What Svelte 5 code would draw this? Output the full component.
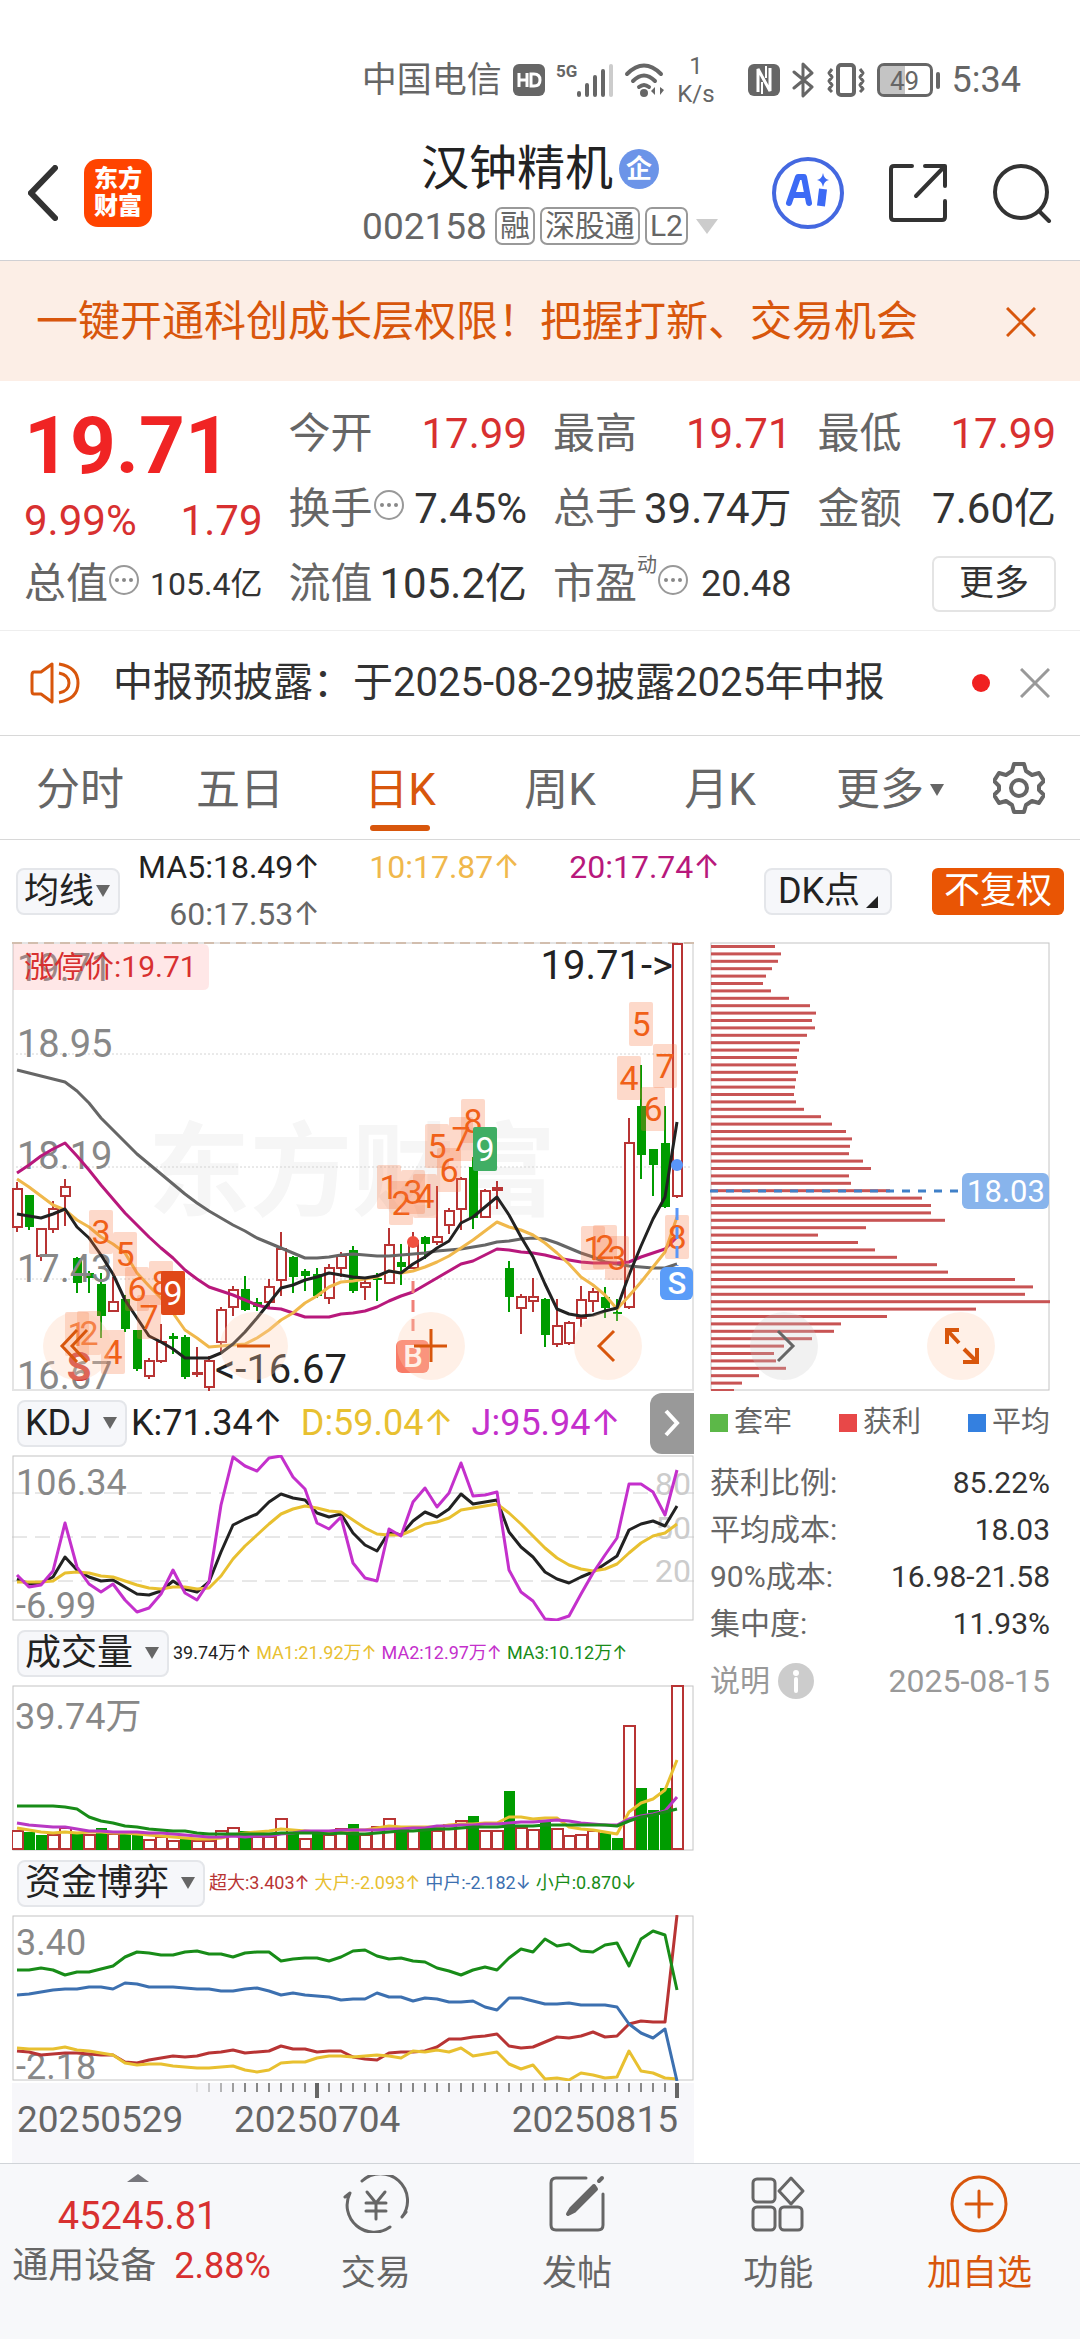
<script lang="ts">
    type Candle = [up: number, top: number, bottom: number, high: number, low: number];

    const STEP = 12;
    const START = 5;

    // 1 = rise, 0 = fall, then body top, body bottom, high, low
    const candles: Candle[] = [
        [1, 246, 286, 240, 290], [0, 253, 285, 253, 288], [1, 286, 315, 286, 319], [1, 266, 288, 259, 291],
        [1, 244, 255, 237, 284], [0, 316, 341, 315, 351], [0, 331, 336, 329, 351], [0, 342, 374, 331, 396],
        [1, 359, 370, 335, 370], [0, 357, 387, 353, 390], [0, 388, 427, 388, 429], [1, 418, 435, 416, 437],
        [1, 399, 420, 382, 421], [0, 394, 397, 391, 412], [0, 395, 435, 393, 437], [1, 430, 432, 405, 435],
        [1, 418, 446, 414, 449], [1, 367, 401, 365, 412], [1, 347, 366, 344, 374], [0, 347, 368, 334, 369],
        [0, 360, 365, 356, 369], [1, 344, 361, 337, 365], [1, 306, 339, 290, 354], [0, 315, 335, 314, 351],
        [0, 329, 334, 327, 349], [0, 332, 354, 326, 356], [1, 325, 357, 322, 362], [1, 313, 327, 310, 335],
        [0, 308, 349, 304, 351], [1, 340, 346, 338, 358], [0, 336, 338, 331, 359], [1, 302, 342, 286, 342],
        [0, 320, 325, 302, 343], [1, 298, 327, 290, 327], [0, 295, 302, 294, 317], [1, 294, 301, 244, 303],
        [1, 268, 284, 266, 292], [1, 236, 268, 235, 288], [0, 225, 276, 215, 287], [1, 248, 276, 247, 276],
        [1, 245, 249, 239, 267], [0, 326, 355, 319, 370], [1, 354, 367, 352, 392], [1, 354, 360, 336, 370],
        [0, 357, 393, 356, 405], [1, 383, 403, 357, 405], [1, 380, 402, 379, 403], [1, 357, 377, 344, 385],
        [1, 349, 360, 346, 370], [0, 355, 366, 345, 376], [0, 370, 372, 357, 379], [1, 200, 366, 176, 367],
        [0, 164, 213, 123, 237], [0, 207, 223, 207, 254], [0, 201, 265, 164, 266], [1, 1, 255, 1, 256],
    ];

    const ma5 = [272, 274, 276, 272, 267, 285, 296, 313, 332, 358, 376, 394, 400, 407, 416, 416, 416, 411, 402, 390, 376, 361, 346, 343, 338, 335, 331, 333, 335, 336, 334, 329, 331, 322, 315, 306, 299, 281, 275, 265, 255, 273, 295, 315, 342, 367, 372, 374, 373, 369, 366, 333, 304, 277, 255, 180];
    const ma10 = [237, 245, 254, 263, 268, 278, 285, 295, 302, 311, 331, 344, 356, 371, 388, 396, 405, 404, 403, 402, 396, 388, 378, 371, 361, 354, 345, 340, 339, 337, 335, 329, 331, 329, 325, 320, 314, 306, 298, 289, 280, 285, 288, 293, 301, 311, 322, 335, 343, 353, 367, 354, 340, 325, 310, 275];
    const ma20 = [231, 223, 214, 207, 201, 214, 228, 243, 257, 271, 283, 295, 306, 316, 328, 337, 345, 349, 353, 358, 363, 366, 367, 371, 375, 375, 375, 372, 371, 369, 365, 359, 354, 350, 343, 336, 329, 322, 319, 313, 307, 308, 310, 311, 313, 316, 318, 320, 321, 321, 321, 320, 315, 311, 307, 295];
    const ma60 = [128, 131, 134, 137, 140, 149, 161, 176, 188, 200, 212, 222, 232, 242, 252, 261, 269, 276, 283, 289, 296, 301, 306, 311, 316, 316, 315, 313, 312, 313, 314, 314, 313, 312, 311, 309, 308, 307, 305, 303, 300, 299, 297, 296, 297, 301, 306, 311, 315, 320, 322, 324, 325, 326, 326, 322];

    // candle index, centre y, count
    const counts = [
        [5, 392, 1], [6, 391, 2], [7, 290, 3], [8, 410, 4], [9, 312, 5], [10, 347, 6], [11, 375, 7], [12, 341, 8],
        [31, 245, 1], [32, 261, 2], [33, 250, 3], [34, 254, 4], [35, 204, 5], [36, 228, 6], [37, 197, 7], [38, 179, 8],
        [48, 306, 1], [49, 305, 2], [50, 316, 3], [51, 136, 4], [52, 82, 5], [53, 167, 6], [54, 124, 7], [55, 295, 8],
    ];

    const kdj = {
        k: [124, 129, 128, 122, 102, 115, 122, 126, 125, 132, 139, 140, 136, 126, 134, 137, 127, 97, 70, 64, 59, 47, 39, 43, 45, 58, 62, 59, 78, 90, 96, 77, 80, 66, 57, 62, 54, 39, 49, 47, 45, 77, 92, 102, 117, 124, 128, 122, 117, 109, 101, 75, 69, 66, 71, 51],
        d: [127, 127, 127, 126, 118, 117, 118, 121, 122, 126, 130, 133, 134, 132, 132, 134, 133, 121, 104, 91, 80, 69, 59, 54, 51, 53, 56, 57, 65, 73, 79, 80, 80, 75, 69, 67, 63, 55, 53, 51, 49, 58, 69, 81, 93, 103, 110, 114, 116, 114, 109, 98, 88, 81, 78, 69],
        j: [120, 132, 130, 116, 68, 112, 129, 137, 129, 145, 157, 153, 139, 115, 138, 145, 127, 50, 2, 11, 16, 3, 1, 22, 34, 68, 74, 62, 108, 123, 126, 74, 81, 47, 33, 52, 38, 8, 41, 40, 37, 115, 137, 146, 164, 165, 161, 139, 118, 100, 83, 29, 29, 37, 60, 15],
    };

    const volumes = [20, 18, 15, 16, 23, 17, 16, 22, 17, 17, 16, 11, 14, 10, 12, 10, 10, 20, 23, 19, 14, 14, 32, 18, 12, 17, 16, 22, 26, 16, 24, 32, 20, 24, 20, 20, 26, 30, 34, 20, 20, 59, 23, 21, 28, 22, 15, 16, 20, 17, 12, 125, 62, 40, 62, 165];
    const volFalls = [1, 2, 5, 7, 9, 10, 14, 19, 23, 25, 28, 32, 34, 38, 41, 44, 49, 50, 52, 53, 54];
    const volMa = {
        ma1: [143, 145, 147, 148, 147, 148, 147, 147, 148, 148, 149, 150, 151, 152, 153, 154, 154, 153, 150, 148, 147, 146, 144, 145, 146, 147, 147, 146, 145, 145, 143, 141, 142, 142, 142, 142, 140, 139, 139, 138, 138, 132, 132, 134, 133, 133, 142, 144, 145, 147, 149, 127, 118, 114, 105, 75],
        ma2: [138, 140, 141, 142, 142, 144, 146, 146, 147, 147, 147, 148, 148, 149, 150, 151, 152, 152, 151, 152, 151, 151, 149, 148, 146, 146, 146, 145, 145, 145, 145, 144, 144, 143, 143, 141, 141, 140, 140, 139, 139, 138, 137, 137, 136, 135, 136, 138, 139, 140, 140, 134, 131, 129, 126, 112],
        ma3: [121, 121, 121, 121, 122, 124, 132, 136, 138, 141, 142, 144, 145, 146, 146, 148, 149, 149, 149, 149, 149, 149, 148, 148, 148, 148, 149, 148, 149, 149, 148, 147, 146, 146, 145, 144, 144, 143, 142, 142, 142, 141, 141, 141, 140, 140, 140, 140, 140, 140, 141, 136, 132, 130, 127, 124],
    };

    const funds = {
        small: [55, 55, 53, 55, 60, 57, 57, 54, 51, 42, 37, 38, 40, 40, 37, 36, 39, 39, 42, 38, 37, 37, 46, 44, 43, 43, 46, 42, 36, 35, 41, 44, 43, 46, 47, 53, 56, 60, 55, 52, 55, 43, 34, 37, 24, 31, 29, 36, 37, 30, 28, 51, 24, 16, 20, 75],
        middle: [80, 79, 77, 75, 74, 74, 72, 72, 74, 68, 69, 72, 72, 72, 73, 74, 74, 76, 76, 74, 73, 76, 80, 78, 80, 81, 82, 85, 84, 84, 78, 82, 82, 86, 83, 84, 87, 87, 86, 92, 95, 83, 83, 86, 89, 89, 88, 90, 90, 90, 92, 109, 118, 123, 114, 166],
        huge: [136, 137, 140, 139, 138, 138, 139, 140, 140, 147, 148, 145, 143, 141, 142, 141, 138, 137, 135, 138, 137, 136, 131, 134, 134, 137, 136, 136, 142, 144, 145, 138, 137, 137, 136, 132, 124, 124, 122, 121, 119, 131, 133, 132, 127, 122, 123, 121, 117, 122, 121, 109, 106, 107, 107, 0],
        large: [133, 134, 134, 134, 132, 135, 136, 138, 140, 148, 150, 149, 149, 151, 152, 153, 153, 152, 151, 155, 157, 155, 148, 147, 147, 143, 141, 141, 142, 141, 140, 141, 143, 136, 137, 135, 137, 133, 141, 139, 137, 149, 154, 150, 164, 163, 165, 158, 160, 163, 162, 136, 156, 158, 163, 164],
    };

    const chips = [64, 70, 67, 61, 55, 52, 60, 78, 99, 105, 101, 104, 96, 89, 88, 86, 85, 87, 85, 84, 83, 85, 93, 110, 121, 135, 141, 139, 138, 152, 160, 138, 140, 179, 211, 220, 220, 234, 155, 107, 147, 164, 186, 226, 237, 304, 322, 314, 339, 265, 176, 130, 123, 101, 73, 63, 65, 75, 48, 31, 23];

    const tabs = ['分时', '五日', '日K', '周K', '月K'];
    let activeTab = '日K';
    let showBanner = true;
    let showNotice = true;

    const xAt = (i: number) => START + STEP * i;
    const line = (ys: number[]) => ys.map((y, i) => `${xAt(i)},${y}`).join(' ');
    const ticks = Array.from({ length: 41 }, (_, i) => i + 15);
</script>

{#snippet dots()}
    <svg class="dots" viewBox="0 0 32 32" aria-hidden="true">
        <circle cx="16" cy="16" r="14" fill="none" stroke="#999" stroke-width="2" />
        <circle cx="9" cy="16" r="2" fill="#888" />
        <circle cx="16" cy="16" r="2" fill="#888" />
        <circle cx="23" cy="16" r="2" fill="#888" />
    </svg>
{/snippet}

{#snippet picker(name: string)}
    <label class="picker">
        <select aria-label={name}>
            <option>{name}</option>
        </select>
        <svg viewBox="0 0 14 12" aria-hidden="true"><path d="M0 0h14L7 12z" fill="#666" /></svg>
    </label>
{/snippet}

<main class="page">
    <div class="status">
        <span class="carrier">中国电信</span>
        <svg width="32" height="32" viewBox="0 0 32 32">
            <rect width="32" height="32" rx="6" fill="#666" />
            <path d="M6 9v14M14 9v14M6 16h8M18 10v12h3q6 0 6-6t-6-6z" fill="none" stroke="#fff" stroke-width="3" />
        </svg>
        <div class="signal">
            <span>5G</span>
            <svg width="36" height="34" viewBox="0 0 36 34" stroke-width="4" stroke-linecap="round" stroke="#666">
                <path d="M2 30v2M10 22v10M18 14v18M26 8v24" />
                <path d="M34 3v29" stroke="#ccc" />
            </svg>
        </div>
        <svg width="42" height="36" viewBox="0 0 42 36" fill="none" stroke="#666" stroke-width="4" stroke-linecap="round">
            <path d="M3 12q17-17 34 0M9 19q11-11 22 0" />
            <path d="M15 25q5-4 10 0" />
            <circle cx="20" cy="31" r="2" fill="#666" />
            <path d="M31 25v8l-4-4zM36 25v8l4-5z" fill="#666" stroke="none" />
        </svg>
        <span class="speed">1<br />K/s</span>
        <svg width="32" height="32" viewBox="0 0 32 32">
            <rect width="32" height="32" rx="6" fill="#666" />
            <path d="M10 28V5l12 22V4" fill="none" stroke="#fff" stroke-width="3" />
            <path d="M14 18v12M18 2v12" stroke="#fff" stroke-width="2" />
        </svg>
        <svg width="24" height="36" viewBox="0 0 24 36" fill="none" stroke="#666" stroke-width="3" stroke-linejoin="round" stroke-linecap="round">
            <path d="M3 10l18 15-9 9V2l9 9L3 26" />
        </svg>
        <svg width="40" height="34" viewBox="0 0 40 34" fill="none" stroke="#666" stroke-width="3" stroke-linejoin="round">
            <rect x="12" y="2" width="16" height="30" rx="3" stroke-width="4" />
            <path d="M6 6L3 10l3 4-3 4 3 4-3 4 3 3M34 6l3 4-3 4 3 4-3 4 3 4-3 3" />
        </svg>
        <div class="battery">49</div>
        <span class="clock">5:34</span>
    </div>

    <header class="top">
        <div class="top-left">
            <button class="icon" aria-label="返回">
                <svg width="30" height="56" viewBox="0 0 30 56"><path d="M27 3L3 28l24 25" fill="none" stroke="#333" stroke-width="6" stroke-linecap="round" /></svg>
            </button>
            <a class="logo" href="#home">东方<br />财富</a>
        </div>
        <div class="stock">
            <h1>汉钟精机<span class="corp">企</span></h1>
            <div class="code">
                <span>002158</span>
                <div class="marks"><i>融</i><i>深股通</i><i>L2</i></div>
                <svg width="22" height="15" viewBox="0 0 22 15"><path d="M0 0h22L11 15z" fill="#ccc" /></svg>
            </div>
        </div>
        <div class="top-right">
            <button class="icon" aria-label="智能助手">
                <svg width="72" height="72" viewBox="0 0 72 72">
                    <circle cx="36" cy="36" r="34" fill="#fff" stroke="#4468e0" stroke-width="4" />
                    <path d="M17 46l9-26h6l5 26M22 38h12" fill="none" stroke="#3c6af5" stroke-width="6" stroke-linejoin="round" stroke-linecap="round" />
                    <path d="M51 32l-2 17" stroke="#3c6af5" stroke-width="8" />
                    <path d="M51 16q1 6 6 7-5 1-6 7-1-6-6-7 5-1 6-7z" fill="#3c6af5" />
                </svg>
            </button>
            <button class="icon" aria-label="分享">
                <svg width="58" height="58" viewBox="0 0 58 58" fill="none" stroke="#333" stroke-width="4" stroke-linejoin="round" stroke-linecap="round">
                    <path d="M23 2H5q-3 0-3 3v48q0 3 3 3h48q3 0 3-3V37M36 2h20v20M55 3L27 32" />
                </svg>
            </button>
            <button class="icon" aria-label="搜索">
                <svg width="60" height="60" viewBox="0 0 60 60" fill="none" stroke="#333" stroke-width="4" stroke-linecap="round">
                    <circle cx="29" cy="29" r="26" /><path d="M47 48l10 10" />
                </svg>
            </button>
        </div>
    </header>

    {#if showBanner}
        <div class="banner">
            <a href="#open">一键开通科创成长层权限！把握打新、交易机会</a>
            <button class="icon" aria-label="关闭" on:click={() => (showBanner = false)}>
                <svg width="30" height="30" viewBox="0 0 30 30"><path d="M1 1l28 28M29 1L1 29" stroke="#d8560c" stroke-width="3" /></svg>
            </button>
        </div>
    {/if}

    <section class="quote">
        <div class="price">
            <strong>19.71</strong>
            <p><span>9.99%</span><span>1.79</span></p>
        </div>
        <div class="cell"><span>今开</span><b class="up">17.99</b></div>
        <div class="cell"><span>最高</span><b class="up">19.71</b></div>
        <div class="cell"><span>最低</span><b class="up">17.99</b></div>
        <div class="cell"><span>换手{@render dots()}</span><b>7.45%</b></div>
        <div class="cell"><span>总手</span><b>39.74万</b></div>
        <div class="cell"><span>金额</span><b>7.60亿</b></div>
        <div class="cell"><span>总值{@render dots()}</span><b class="small">105.4亿</b></div>
        <div class="cell"><span>流值</span><b>105.2亿</b></div>
        <div class="cell"><span>市盈<sup>动</sup>{@render dots()}</span><b class="mid">20.48</b></div>
        <div class="cell end"><button class="more">更多</button></div>
    </section>

    {#if showNotice}
        <div class="notice">
            <svg width="50" height="44" viewBox="0 0 50 44" fill="none" stroke="#d8560c" stroke-width="3" stroke-linejoin="round">
                <path d="M22 3v38L11 33H4q-2 0-2-3V14q0-3 2-3h7z" />
                <path d="M29 3q19 3 19 19T29 41M29 12q10 2 10 10t-10 10" />
            </svg>
            <a href="#notice">中报预披露：于2025-08-29披露2025年中报</a>
            <span class="dot"></span>
            <button class="icon" aria-label="关闭" on:click={() => (showNotice = false)}>
                <svg width="30" height="30" viewBox="0 0 30 30"><path d="M1 1l28 28M29 1L1 29" stroke="#999" stroke-width="3" /></svg>
            </button>
        </div>
    {/if}

    <nav class="tabs">
        {#each tabs as tab}
            <button class:active={tab === activeTab} on:click={() => (activeTab = tab)}>{tab}</button>
        {/each}
        <button class="tab-more">更多<svg width="14" height="12" viewBox="0 0 14 12"><path d="M0 0h14L7 12z" fill="#666" /></svg></button>
        <button class="tab-set" aria-label="设置">
            <svg width="52" height="52" viewBox="0 0 52 52" fill="none" stroke="#666" stroke-width="4" stroke-linejoin="round">
                <path d="M21 2h10l2 7 6 4 7-2 5 8-5 5v4l5 5-5 8-7-2-6 4-2 7H21l-2-7-6-4-7 2-5-8 5-5v-4l-5-5 5-8 7 2 6-4z" />
                <circle cx="26" cy="26" r="8" />
            </svg>
        </button>
    </nav>

    <div class="ma-bar">
        {@render picker('均线')}
        <div class="ma-values">
            <span>MA5:18.49↑</span>
            <span class="c-ma10">10:17.87↑</span>
            <span class="c-ma20">20:17.74↑</span>
            <span class="c-ma60">60:17.53↑</span>
        </div>
        <button class="dk">DK点<svg width="12" height="12" viewBox="0 0 12 12"><path d="M12 0v12H0z" fill="#222" /></svg></button>
        <button class="adjust">不复权</button>
    </div>

    <div class="charts">
        <div class="left">
            <div class="stage">
                <svg viewBox="0 0 682 449" role="img" aria-label="日K">
                    <text x="136" y="266" class="watermark">东方财富</text>
                    <g class="grid"><path d="M0 112h682M0 225h682M0 337h682" /></g>
                    <rect x="1" y="1" width="680" height="447" class="frame" />
                    <path d="M0 1h682" class="limit" />

                    {#each candles as [up, top, bottom, high, low], i}
                        {#if up}
                            <path class="wick-up" d="M{xAt(i)} {high}V{top}M{xAt(i)} {bottom}V{low}" />
                            <rect class="rise" x={xAt(i) - 4} y={top + 1} width="9" height={Math.max(bottom - top - 2, 1)} />
                        {:else}
                            <path class="wick-down" d="M{xAt(i)} {high}V{low}" />
                            <rect class="fall" x={xAt(i) - 4} y={top} width="9" height={bottom - top} />
                        {/if}
                    {/each}

                    <g class="labels">
                        <text x="5" y="39">19.71</text>
                        <text x="5" y="115">18.95</text>
                        <text x="5" y="227">18.19</text>
                        <text x="5" y="340">17.43</text>
                        <text x="5" y="447">16.67</text>
                    </g>

                    <polyline class="ma" points={line(ma60)} stroke="#666" />
                    <polyline class="ma" points={line(ma20)} stroke="#b8187c" />
                    <polyline class="ma" points={line(ma10)} stroke="#f0b84c" />
                    <polyline class="ma" points={line(ma5)} stroke="#222" />

                    <path d="M1 2h190q6 0 6 6v34q0 6-6 6H1z" fill="#f88" fill-opacity="0.2" />
                    <text x="12" y="35" class="limit-text">涨停价:19.71</text>

                    <text x="661" y="37" class="mark" text-anchor="end">19.71-&gt;</text>
                    <text x="203" y="441" class="mark">&lt;-16.67</text>

                    {#each counts as [i, y, n]}
                        <rect class="count" x={xAt(i) - 12} y={y - 22} width="24" height="44" rx="2" />
                        <text class="count-text" x={xAt(i)} y={y + 12}>{n}</text>
                    {/each}
                    <rect x="149" y="329" width="24" height="44" rx="2" fill="#e04818" />
                    <text class="count-text nine" x="161" y="363">9</text>
                    <rect x="461" y="185" width="24" height="44" rx="2" fill="#40ae64" />
                    <text class="count-text nine" x="473" y="219">9</text>

                    <circle cx="401" cy="300" r="6" fill="#f05040" />
                    <path d="M401 339v56" stroke="#f08078" stroke-width="3" stroke-dasharray="12 7" />
                    <rect x="384" y="398" width="33" height="33" rx="6" fill="#f87b67" />
                    <text class="badge" x="401" y="425">B</text>
                    <circle cx="665" cy="223" r="6" fill="#5a96f8" />
                    <path d="M665 266v58" stroke="#5a96f8" stroke-width="3" stroke-dasharray="12 7" />
                    <rect x="648" y="325" width="33" height="33" rx="6" fill="#5a9cf8" />
                    <text class="badge" x="665" y="352">S</text>
                    <text class="sell" x="67" y="439">S</text>
                </svg>
                <div class="tools">
                    <button aria-label="最早"><svg viewBox="0 0 68 68"><path d="M34 18L19 34l15 16M44 18L29 34l15 16" /></svg></button>
                    <button aria-label="缩小"><svg viewBox="0 0 68 68"><path d="M17 34h33" /></svg></button>
                    <button aria-label="放大"><svg viewBox="0 0 68 68"><path d="M17 34h33M34 17v33" /></svg></button>
                    <button aria-label="左移"><svg viewBox="0 0 68 68"><path d="M40 19L25 34l15 15" /></svg></button>
                </div>
            </div>

            <div class="legend">
                {@render picker('KDJ')}
                <div class="kdj-values">
                    <span>K:71.34↑</span><span class="c-yellow">D:59.04↑</span><span class="c-purple">J:95.94↑</span>
                </div>
                <button class="next" aria-label="下一个"><svg width="16" height="28" viewBox="0 0 16 28"><path d="M2 2l11 12L2 26" fill="none" stroke="#fff" stroke-width="4" /></svg></button>
            </div>
            <svg viewBox="0 0 682 166" role="img" aria-label="KDJ">
                <path class="dash" d="M0 38h682M0 82h682M0 126h682" />
                <rect x="1" y="1" width="680" height="164" class="frame dark" />
                <g class="levels">
                    <text x="679" y="40">80</text>
                    <text x="679" y="84">50</text>
                    <text x="679" y="127">20</text>
                </g>
                <g class="labels low">
                    <text x="4" y="40">106.34</text>
                    <text x="4" y="163">-6.99</text>
                </g>
                <polyline class="ma" points={line(kdj.k)} stroke="#222" />
                <polyline class="ma" points={line(kdj.d)} stroke="#e8c030" />
                <polyline class="ma" points={line(kdj.j)} stroke="#c430cc" />
            </svg>

            <div class="legend">
                {@render picker('成交量')}
                <div class="tight">
                    <span>39.74万↑</span><span class="c-yellow">MA1:21.92万↑</span><span class="c-purple">MA2:12.97万↑</span><span class="c-green">MA3:10.12万↑</span>
                </div>
            </div>
            <svg viewBox="0 0 682 166" role="img" aria-label="成交量">
                <rect x="1" y="1" width="680" height="164" class="frame dark" />
                {#each volumes as v, i}
                    {#if volFalls.includes(i)}
                        <rect class="fall" x={xAt(i) - 5} y={165 - v} width="11" height={v} />
                    {:else}
                        <rect class="rise" x={xAt(i) - 5} y={166 - v} width="11" height={v - 2} />
                    {/if}
                {/each}
                <polyline class="ma" points={line(volMa.ma1)} stroke="#e8c030" />
                <polyline class="ma" points={line(volMa.ma2)} stroke="#b838c4" />
                <polyline class="ma" points={line(volMa.ma3)} stroke="#188c18" />
                <text x="3" y="44" class="label low">39.74万</text>
            </svg>

            <div class="legend">
                {@render picker('资金博弈')}
                <div class="tight">
                    <span class="c-red">超大:3.403↑</span><span class="c-yellow">大户:-2.093↑</span><span class="c-blue">中户:-2.182↓</span><span class="c-green">小户:0.870↓</span>
                </div>
            </div>
            <svg viewBox="0 0 682 166" role="img" aria-label="资金博弈">
                <rect x="1" y="1" width="680" height="164" class="frame dark" />
                <g class="labels low">
                    <text x="4" y="40">3.40</text>
                    <text x="4" y="164">-2.18</text>
                </g>
                <polyline class="ma" points={line(funds.huge)} stroke="#b83434" />
                <polyline class="ma" points={line(funds.large)} stroke="#e8c030" />
                <polyline class="ma" points={line(funds.small)} stroke="#188c18" />
                <polyline class="ma" points={line(funds.middle)} stroke="#3c70b0" />
            </svg>

            <svg class="axis" viewBox="0 0 682 80" role="img" aria-label="日期">
                {#each ticks as t}
                    {#if t === 25 || t === 55}
                        <path d="M{xAt(t)} 0v15" stroke="#666" stroke-width="4" />
                    {:else}
                        <path d="M{xAt(t)} 0v9" stroke="#888" stroke-width="2" opacity={Math.min(1, (t - 14) / 5)} />
                    {/if}
                {/each}
                <text x="5" y="49">20250529</text>
                <text x="222" y="49">20250704</text>
                <text x="666" y="49" text-anchor="end">20250815</text>
            </svg>
        </div>

        <aside class="right">
            <div class="stage">
                <svg viewBox="0 0 340 449" role="img" aria-label="筹码分布">
                    <rect x="1" y="1" width="338" height="447" class="frame dark" />
                    {#each chips as w, i}
                        <rect x="1" y={3 + i * 7.4} width={w} height="3" fill="#c85454" />
                    {/each}
                    <path d="M0 249h252" stroke="#4080c8" stroke-width="3" stroke-dasharray="8 8" />
                    <rect x="252" y="231" width="87" height="36" rx="6" fill="#88b4ec" />
                    <text x="296" y="260" class="avg">18.03</text>
                </svg>
                <div class="tools">
                    <button class="gray" aria-label="右移"><svg viewBox="0 0 68 68"><path d="M28 19l15 15-15 15" /></svg></button>
                    <button aria-label="全屏"><svg viewBox="0 0 68 68"><path class="full" d="M32 18H20v14M20 18l12 13M36 50h14V36M50 50L37 37" /></svg></button>
                </div>
            </div>
            <div class="chip-legend">
                <span><i class="bg-green"></i>套牢</span>
                <span><i class="bg-red"></i>获利</span>
                <span><i class="bg-blue"></i>平均</span>
            </div>
            <dl>
                <div><dt>获利比例:</dt><dd>85.22%</dd></div>
                <div><dt>平均成本:</dt><dd>18.03</dd></div>
                <div><dt>90%成本:</dt><dd>16.98-21.58</dd></div>
                <div><dt>集中度:</dt><dd>11.93%</dd></div>
            </dl>
            <div class="explain">
                <span>说明</span>
                <svg width="36" height="36" viewBox="0 0 36 36"><circle cx="18" cy="18" r="18" fill="#ccc" /><path d="M18 16v12" stroke="#fff" stroke-width="4" stroke-linecap="round" /><circle cx="18" cy="10" r="3" fill="#fff" /></svg>
                <time>2025-08-15</time>
            </div>
        </aside>
    </div>

    <footer class="dock">
        <button class="index">
            <svg width="22" height="8" viewBox="0 0 22 8"><path d="M0 8L11 0l11 8z" fill="#77777c" /></svg>
            <b>45245.81</b>
            <span>通用设备<em>2.88%</em></span>
        </button>
        <button class="item">
            <svg viewBox="0 0 66 58" fill="none" stroke="#666" stroke-width="3" stroke-linecap="round" stroke-linejoin="round">
                <path d="M19 6a27 27 0 0 1 40 36l4-5M47 52A27 27 0 0 1 7 18l-5 4" />
                <path d="M24 17l9 11 9-11M33 28v16M23 28h20M23 36h20" />
            </svg>
            交易
        </button>
        <button class="item">
            <svg viewBox="0 0 58 58" fill="none" stroke="#666" stroke-width="3" stroke-linecap="round" stroke-linejoin="round">
                <path d="M38 3H8q-5 0-5 5v42q0 5 5 5h42q5 0 5-5V19" />
                <path d="M46 11L23 34l-3 5 6-3 22-22zM51 6l3-3" fill="#666" stroke-width="4" />
            </svg>
            发帖
        </button>
        <button class="item">
            <svg viewBox="0 0 58 58" fill="none" stroke="#666" stroke-width="3" stroke-linejoin="round">
                <rect x="4" y="4" width="22" height="23" rx="4" />
                <rect x="4" y="32" width="22" height="23" rx="4" />
                <rect x="31" y="32" width="22" height="23" rx="4" />
                <path d="M42 3l12 13-12 13-12-13z" />
            </svg>
            功能
        </button>
        <button class="item add">
            <svg viewBox="0 0 58 58" fill="none" stroke="#d8560c" stroke-width="3" stroke-linecap="round">
                <circle cx="29" cy="29" r="27" /><path d="M29 16v26M16 29h26" />
            </svg>
            加自选
        </button>
    </footer>
</main>

<style>
    :global(body) {
        background: #fff;
    }

    .page {
        font-family: Roboto, Inter, "Noto Sans CJK SC", sans-serif;
        color: #333;
        line-height: 1;
    }

    button {
        font: inherit;
        color: inherit;
        background: none;
        border: none;
        padding: 0;
        cursor: pointer;
    }

    a {
        color: inherit;
        text-decoration: none;
    }

    svg {
        display: block;
        flex-shrink: 0;
    }

    .icon {
        display: flex;
    }

    .status {
        display: flex;
        align-items: center;
        justify-content: flex-end;
        gap: 11px;
        height: 126px;
        padding: 34px 59px 0 0;
        box-sizing: border-box;
        color: #666;
        font-size: 36px;
    }

    .carrier {
        font-size: 35px;
    }

    .signal {
        display: flex;
        align-items: flex-start;
    }

    .signal span {
        font-size: 17px;
        font-weight: 700;
    }

    .speed {
        font-size: 24px;
        line-height: 28px;
        text-align: center;
        margin-right: 22px;
    }

    .battery {
        position: relative;
        width: 50px;
        height: 28px;
        margin-right: 8px;
        border: 3px solid #666;
        border-radius: 7px;
        background: linear-gradient(90deg, #c4c4c4 50%, transparent 50%) content-box;
        font-size: 26px;
        line-height: 30px;
        text-align: center;
    }

    .battery::after {
        content: "";
        position: absolute;
        right: -10px;
        top: 6px;
        width: 4px;
        height: 17px;
        border-radius: 2px;
        background: #666;
    }

    .top {
        display: grid;
        grid-template-columns: 1fr auto 1fr;
        align-items: center;
        height: 134px;
        padding: 0 28px;
        border-bottom: 1px solid #d0d0d4;
    }

    .top-left,
    .top-right {
        display: flex;
        align-items: center;
        gap: 26px;
    }

    .top-right {
        justify-content: flex-end;
        gap: 45px;
    }

    .logo {
        width: 68px;
        height: 68px;
        padding-top: 7px;
        box-sizing: border-box;
        border-radius: 14px;
        background: #ff4400;
        color: #fff;
        font-size: 24px;
        font-weight: 900;
        line-height: 27px;
        text-align: center;
    }

    h1 {
        display: flex;
        align-items: center;
        justify-content: center;
        gap: 6px;
        margin: 0 0 10px;
        font-size: 48px;
        font-weight: 400;
        line-height: 56px;
        color: #222;
    }

    .corp {
        width: 40px;
        border-radius: 50%;
        background: #6c94e8;
        color: #fff;
        font-size: 26px;
        font-weight: 700;
        line-height: 40px;
        text-align: center;
    }

    .code {
        display: flex;
        align-items: center;
        gap: 8px;
        color: #666;
        font-size: 37px;
    }

    .marks {
        display: flex;
        gap: 5px;
    }

    .marks i {
        padding: 0 3px;
        border: 2px solid #999;
        border-radius: 7px;
        font-size: 30px;
        font-style: normal;
        line-height: 34px;
    }

    .banner {
        display: flex;
        align-items: center;
        justify-content: space-between;
        height: 120px;
        padding: 2px 44px 0 36px;
        box-sizing: border-box;
        background: #fceee6;
        color: #d8560c;
        font-size: 42px;
    }

    .quote {
        display: grid;
        grid-template-columns: repeat(4, 1fr);
        grid-auto-rows: 75px;
        column-gap: 26px;
        padding: 15px 24px 9px;
        border-bottom: 1px solid #eee;
    }

    .price {
        grid-row: span 2;
        color: #d83030;
    }

    .price strong {
        display: block;
        font-size: 80px;
        line-height: 100px;
        color: #f02424;
    }

    .price p {
        display: flex;
        justify-content: space-between;
        margin: 0;
        font-size: 42px;
        line-height: 50px;
    }

    .cell {
        display: flex;
        align-items: center;
        justify-content: space-between;
        font-size: 42px;
        white-space: nowrap;
    }

    .cell span {
        display: flex;
        align-items: center;
        color: #666;
    }

    .cell sup {
        align-self: flex-start;
        margin-top: -8px;
        font-size: 20px;
        line-height: 20px;
    }

    .cell b {
        font-weight: 400;
    }

    .cell .up {
        color: #d83030;
    }

    .cell .small {
        font-size: 32px;
    }

    .cell .mid {
        font-size: 36px;
    }

    .cell.end {
        justify-content: flex-end;
    }

    .dots {
        width: 32px;
        height: 32px;
        margin-top: -8px;
    }

    .more {
        width: 124px;
        height: 56px;
        border: 2px solid #e4e4e4;
        border-radius: 7px;
        font-size: 35px;
    }

    .notice {
        display: flex;
        align-items: center;
        height: 104px;
        padding: 0 30px;
        border-bottom: 1px solid #d8d8d8;
        font-size: 40px;
    }

    .notice a {
        flex: 1;
        margin-left: 33px;
        white-space: nowrap;
    }

    .dot {
        width: 18px;
        height: 18px;
        margin-right: 30px;
        border-radius: 50%;
        background: #f02020;
    }

    .tabs {
        display: grid;
        grid-template-columns: repeat(5, 16fr) 18fr 10fr;
        height: 103px;
        border-bottom: 1px solid #d8d8d8;
        color: #666;
        font-size: 44px;
    }

    .tabs button {
        position: relative;
        padding-top: 4px;
    }

    .tabs .active {
        color: #d8560c;
    }

    .tabs .active::after {
        content: "";
        position: absolute;
        left: calc(50% - 30px);
        bottom: 8px;
        width: 60px;
        height: 6px;
        border-radius: 3px;
        background: #d8560c;
    }

    .tabs .tab-more,
    .tabs .tab-set {
        display: flex;
        align-items: center;
        justify-content: center;
        gap: 6px;
    }

    .tabs .tab-set {
        padding: 0 22px 0 0;
    }

    .ma-bar {
        display: flex;
        align-items: center;
        height: 102px;
        padding: 0 16px;
    }

    .ma-values {
        flex: 1;
        display: grid;
        grid-template-columns: repeat(3, 200px);
        align-self: flex-start;
        padding-top: 4px;
        color: #222;
        font-size: 32px;
        line-height: 47px;
        text-align: right;
    }

    .c-ma10 { color: #f0b84c; }
    .c-ma20 { color: #b8187c; }
    .c-ma60 { color: #666; }
    .c-yellow { color: #e8c030; }
    .c-purple { color: #c430cc; }
    .c-green { color: #188c18; }
    .c-red { color: #b83434; }
    .c-blue { color: #3c70b0; }

    .picker {
        position: relative;
        flex-shrink: 0;
    }

    .picker select {
        appearance: none;
        display: block;
        height: 47px;
        padding: 0 33px 0 6px;
        border: 2px solid #e4e6ea;
        border-radius: 8px;
        background: #f6f7fa;
        color: #222;
        font-family: inherit;
        font-size: 36px;
        line-height: 43px;
    }

    .ma-bar .picker select {
        padding-right: 23px;
        font-size: 35px;
    }

    .picker svg {
        position: absolute;
        right: 10px;
        top: 17px;
        width: 14px;
        height: 12px;
        pointer-events: none;
    }

    .dk,
    .adjust {
        display: flex;
        align-items: center;
        justify-content: center;
        height: 47px;
        border-radius: 8px;
        font-size: 36px;
    }

    .dk {
        width: 128px;
        margin-right: 40px;
        gap: 6px;
        border: 2px solid #e4e6ea;
        background: #f6f7fa;
        color: #222;
    }

    .dk svg {
        align-self: flex-end;
        margin-bottom: 5px;
    }

    .adjust {
        width: 132px;
        border-radius: 6px;
        background: #e95504;
        color: #fff;
    }

    .charts {
        display: grid;
        grid-template-columns: 682fr 340fr;
        column-gap: 16px;
        padding: 0 30px 0 12px;
    }

    .left > svg,
    .stage > svg {
        width: 100%;
        height: auto;
    }

    .stage {
        position: relative;
    }

    .watermark {
        fill: #f6f6f6;
        font-size: 102px;
        font-weight: 700;
    }

    .grid path {
        stroke: #d4d4d4;
        stroke-width: 1;
        stroke-dasharray: 2 2;
    }

    .frame {
        fill: none;
        stroke: #e4e4e4;
        stroke-width: 2;
    }

    .frame.dark {
        stroke: #c4c4c4;
        stroke-width: 1;
    }

    .limit {
        stroke: #c09878;
        stroke-dasharray: 10 6;
    }

    .rise {
        fill: #fff;
        stroke: #b83434;
        stroke-width: 2;
    }

    .wick-up {
        stroke: #b83434;
        stroke-width: 2;
    }

    .fall {
        fill: #009c00;
    }

    .wick-down {
        stroke: #009c00;
        stroke-width: 2;
    }

    .ma {
        fill: none;
        stroke-width: 3;
        stroke-linejoin: round;
    }

    .labels,
    .label {
        fill: #888;
        font-size: 38px;
    }

    .low {
        font-size: 36px;
    }

    .levels {
        fill: #ccc;
        font-size: 32px;
        text-anchor: end;
    }

    .limit-text {
        fill: #d83030;
        font-size: 30px;
    }

    .mark {
        fill: #222;
        font-size: 40px;
    }

    .count {
        fill: #f87840;
        fill-opacity: 0.28;
    }

    .count-text {
        fill: #f06018;
        font-size: 34px;
        text-anchor: middle;
    }

    .nine {
        fill: #fff;
    }

    .badge {
        fill: #fff;
        font-size: 31px;
        font-weight: 500;
        text-anchor: middle;
    }

    .sell {
        fill: #d03830;
        font-size: 40px;
        font-weight: 700;
        text-anchor: middle;
    }

    .avg {
        fill: #fff;
        font-size: 31px;
        text-anchor: middle;
    }

    .dash {
        stroke: #d0d0d0;
        stroke-dasharray: 15 8;
    }

    .tools {
        position: absolute;
        left: 31px;
        right: 52px;
        bottom: 11px;
        display: flex;
        justify-content: space-between;
    }

    .right .tools {
        left: 40px;
        right: 55px;
    }

    .tools button {
        width: 68px;
        height: 68px;
        border-radius: 50%;
        background: rgba(255, 204, 176, 0.3);
    }

    .tools .gray {
        background: rgba(200, 200, 200, 0.25);
    }

    .tools path {
        fill: none;
        stroke: #d8560c;
        stroke-width: 3;
    }

    .tools .full {
        stroke-width: 4;
    }

    .tools .gray path {
        stroke: #666;
    }

    .legend {
        display: flex;
        align-items: center;
        gap: 4px;
        height: 64px;
        padding-left: 5px;
        white-space: nowrap;
    }

    .kdj-values {
        flex: 1;
        display: flex;
        gap: 18px;
        color: #222;
        font-size: 36px;
    }

    .next {
        display: flex;
        align-items: center;
        justify-content: center;
        width: 44px;
        height: 61px;
        border-radius: 12px 0 0 12px;
        background: #999;
    }

    .tight {
        display: flex;
        gap: 5px;
        color: #222;
        font-size: 18px;
    }

    .left > .axis {
        margin-top: 2px;
        background: #f7f7fa;
        fill: #666;
        font-size: 37px;
    }

    .chip-legend {
        display: flex;
        justify-content: space-between;
        margin: 17px 0 22px;
        color: #666;
        font-size: 29px;
    }

    .chip-legend span {
        display: flex;
        align-items: center;
        gap: 6px;
        line-height: 29px;
    }

    .chip-legend i {
        width: 18px;
        height: 18px;
    }

    .bg-green { background: #5cb848; }
    .bg-red { background: #e84848; }
    .bg-blue { background: #3480e0; }

    dl {
        margin: 0;
        font-size: 30px;
    }

    dl div {
        display: flex;
        justify-content: space-between;
        line-height: 47px;
    }

    dt {
        color: #666;
    }

    dd {
        margin: 0;
    }

    .explain {
        display: flex;
        align-items: center;
        gap: 8px;
        margin-top: 16px;
        color: #999;
        font-size: 30px;
    }

    .explain time {
        margin-left: auto;
        font-size: 32px;
    }

    .dock {
        display: grid;
        grid-template-columns: 275fr repeat(4, 201fr);
        height: 175px;
        border-top: 1px solid #d0d4d8;
        background: #f7f8fa;
        color: #666;
    }

    .index {
        display: flex;
        flex-direction: column;
        align-items: center;
        padding-top: 10px;
    }

    .index b {
        margin: 14px 0 12px;
        color: #d83030;
        font-size: 38px;
        font-weight: 400;
        line-height: 40px;
    }

    .index span {
        display: flex;
        gap: 18px;
        margin-left: 8px;
        font-size: 36px;
        line-height: 36px;
    }

    .index em {
        color: #d83030;
        font-style: normal;
    }

    .item {
        display: flex;
        flex-direction: column;
        align-items: center;
        gap: 23px;
        padding-top: 11px;
        font-size: 35px;
        line-height: 35px;
    }

    .item svg {
        height: 58px;
    }

    .add {
        color: #d8560c;
    }
</style>
